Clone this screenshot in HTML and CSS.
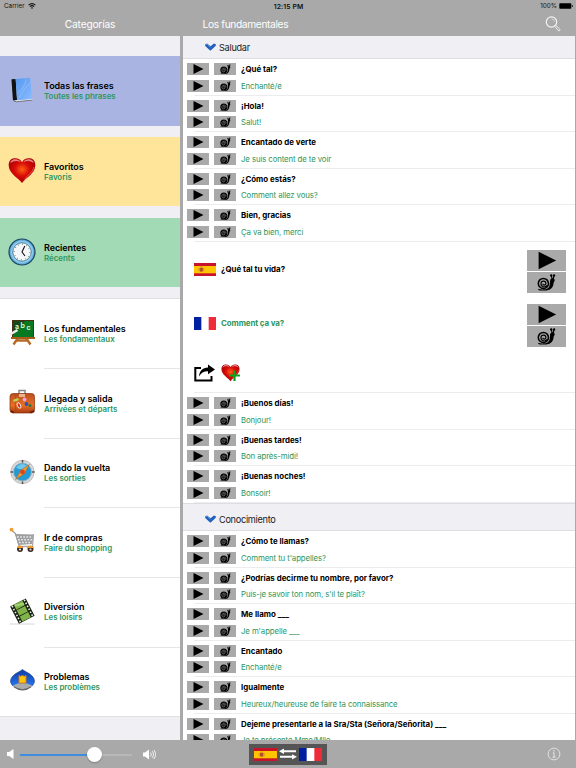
FILE: index.html
```html
<!DOCTYPE html>
<html lang="es">
<head>
    <meta charset="UTF-8">
    <meta name="viewport" content="width=device-width, initial-scale=1.0">
    <title>Los fundamentales</title>
    <link rel="stylesheet" href="styles.css">
</head>
<body>
    <svg class="sprite" width="0" height="0">
        <defs>
            <linearGradient id="gBook" x1="0" y1="0" x2="1" y2="1"><stop offset="0" stop-color="#5598ee"/><stop offset="1" stop-color="#8bbcff"/></linearGradient>
            <radialGradient id="gHeart" cx=".5" cy=".45" r=".55"><stop offset="0" stop-color="#ff6014"/><stop offset=".5" stop-color="#d90c08"/><stop offset="1" stop-color="#a80005"/></radialGradient>
            <radialGradient id="gClock"><stop offset=".7" stop-color="#b9ecff"/><stop offset="1" stop-color="#3c91c9"/></radialGradient>
            <linearGradient id="gCase" x1="0" y1="0" x2="0" y2="1"><stop offset="0" stop-color="#bd4f20"/><stop offset=".6" stop-color="#e87025"/><stop offset="1" stop-color="#a83a10"/></linearGradient>
            <linearGradient id="gCap" x1="0" y1="0" x2="0" y2="1"><stop offset="0" stop-color="#0d3ca4"/><stop offset="1" stop-color="#2476f0"/></linearGradient>
        </defs>
        <symbol id="play" viewBox="0 0 22 12"><path d="M6.5 1v10l10-5z"/></symbol>
        <symbol id="snail" viewBox="0 0 40 21">
            <path d="M11 17c3 1 8 1 10.500-.5 2-1.500 2-5 2.200-8 .2-1.500 1.300-2.300 2.500-2 1.400 0 2.400.9 2.200 2-.2 1-1 1.500-1.200 3.100-.4 4-2.700 6.600-7.200 7H13c-1 0-1.700-.7-2-1.600z"/>
            <circle cx="16.800" cy="11.500" r="5.200" class="shell"/>
            <path d="M20.500 13.500c-2 2.800-6.300 1.700-6.200-1.900.2-3.200 4.900-3.400 5.100-.3 0 2.300-3.200 2.500-3.100.4" class="spiral"/>
            <path d="M25.800 7l-.8-3.500M27 7l.6-3.500" class="spiral"/>
            <circle cx="24.800" cy="3.200" r="1.200"/><circle cx="27.800" cy="3.200" r="1.200"/>
        </symbol>
        <symbol id="snail-small" viewBox="0 0 22 12">
            <path d="M6.500 10.200c2 .7 5.700.5 6.800-1.300.7-1.200.2-3.600.8-5 .4-.8 2.300-.7 2.300.4-1.100 1.300-.9 3.300-1.900 5-1 1.600-2.500 1.800-4.200 1.800H8c-.8 0-1.300-.4-1.500-.9z"/>
            <circle cx="9.800" cy="7" r="3.500"/>
            <path d="M12 7.300c0-3-4.200-2.800-4.100-.1 0 2.500 3.300 2.100 3 .1-.2-1.200-1.700-1-1.600.1" fill="none" stroke="#a0a0a0" stroke-width=".6"/>
            <path d="M14.400 4l-.6-2.100M15.400 4l.5-2.500" class="feeler"/>
        </symbol>
        <symbol id="chevron" viewBox="0 0 11 8"><path d="M.2 1.300L2 .6l3.500 2.700L9 .6l1.800.7v1.500L5.700 7.500h-.6L.2 3z" fill="#2260bd"/><path d="M1 1.800L2.200 1.200l3.200 3" fill="none" stroke="#5f9be6" stroke-width=".8"/></symbol>
        <symbol id="spain" viewBox="0 0 24 13" preserveAspectRatio="none">
            <path d="M0 0h24v13H0z" fill="#c8142a"/><path d="M0 3h24v7.300H0z" fill="#ffc400"/>
            <path d="M6.200 4.700h3.600v2.600c0 2-3.600 2-3.600 0z" fill="#b5512a"/><path d="M7 4h2M5.400 5v3.300M10.600 5v3.300" stroke="#b07a3a" stroke-width=".6"/>
        </symbol>
        <symbol id="france" viewBox="0 0 24 13" preserveAspectRatio="none">
            <path d="M0 0h24v13H0z" fill="#fff"/><path d="M0 0h8v13H0z" fill="#00209f"/><path d="M16 0h8v13h-8z" fill="#ef2b3a"/>
        </symbol>
        <symbol id="heart" viewBox="0 0 28 28">
            <path d="M14 26C10 20.500.7 16.500.7 8.500.7 3 3.800 1.300 7.300 1.300c3 0 5.500 1.400 6.700 4 1.200-2.600 3.700-4 6.700-4 3.500 0 6.600 1.700 6.600 7.200C27.300 16.500 18 20.500 14 26z" fill="url(#gHeart)"/>
            <path d="M2.300 6.200C3 2.800 5.300 2.300 7.300 2.300c2.400 0 4.500 1.200 5.400 3-3.200-2-7.200-1.700-10.400.9zM25.700 6.200c-.7-3.400-3-3.900-5-3.900-2.400 0-4.500 1.200-5.400 3 3.200-2 7.200-1.700 10.400.9z" fill="#f3a1a1" opacity=".8"/>
            <path d="M26 10c-.8 4.500-5.500 8-9.500 12" fill="none" stroke="#ee7b72" stroke-width=".7"/>
        </symbol>
    </svg>

    <header class="topbar">
        <div class="status">
            <div class="status-left">Carrier
                <svg width="8" height="6" viewBox="0 0 8 6"><path d="M.6 2.200c2-1.900 4.800-1.900 6.800 0M1.900 3.600c1.300-1.200 2.900-1.200 4.200 0" fill="none" stroke="#111" stroke-width="1.100"/><path d="M2.900 4.600h2.200L4 5.900z"/></svg>
            </div>
            <div class="status-time">12:15 PM</div>
            <div class="status-right">100%
                <svg width="14" height="6" viewBox="0 0 14 6"><rect x=".3" y=".3" width="12" height="5.400" rx=".8"/><path d="M12.900 2v2l1-.5v-1z"/></svg>
            </div>
        </div>
        <div class="titles">
            <div class="title-left">Categorías</div>
            <div class="title-right">Los fundamentales</div>
            <svg class="search" width="16" height="16" viewBox="0 0 16 16" fill="none" stroke="#f4f4f4"><circle cx="6.500" cy="6" r="5.200" stroke-width="1.200"/><path d="M6.500 3a3 3 0 0 1 3 2.500" stroke-width=".6"/><path d="M9.800 10.300l1-1 3.900 3.700c1 1-.5 2.500-1.500 1.500z" stroke-width=".9"/></svg>
        </div>
    </header>

    <main class="main">
        <nav class="sidebar">
            <div class="category blue">
                <svg class="icon" viewBox="-1 -.5 30 30">
                    <path d="M3.200 3.200l4-.4 1.500 22.300-3.500.6z" fill="#111"/><path d="M5.200 25.700l19.500-2 .8 1.600L8 27z" fill="#eee"/><path d="M5.200 26.200l3 .9 17-1.800" fill="none" stroke="#444" stroke-width=".7"/>
                    <path d="M7.200 2.800L22.700 1.500l2 22.700-16 1.400z" fill="url(#gBook)"/><path d="M4.500 3l1.600 22.400" stroke="#111" stroke-width="3.600"/><path d="M9.500 18c5-4 8-9 9-15M11 23c3-7 7-12 12-16" fill="none" stroke="#a4cbff" stroke-width=".6"/>
                </svg>
                <div><div class="name">Todas las frases</div><div class="sub">Toutes les phrases</div></div>
            </div>
            <div class="category yellow">
                <svg class="icon"><use href="#heart"/></svg>
                <div><div class="name">Favoritos</div><div class="sub">Favoris</div></div>
            </div>
            <div class="category green">
                <svg class="icon" viewBox="0 0 28 28">
                    <circle cx="14" cy="14" r="13" fill="url(#gClock)" stroke="#1f4661" stroke-width="1.200"/><circle cx="14" cy="14" r="9.300" fill="#f4f6f8" stroke="#407b9c"/>
                    <circle cx="14" cy="14" r="7.800" fill="none" stroke="#333" stroke-width="1" stroke-dasharray=".7 3.384"/><path d="M16.800 8L14 14l3 4" fill="none" stroke="#111" stroke-width="1.100"/>
                </svg>
                <div><div class="name">Recientes</div><div class="sub">Récents</div></div>
            </div>
            <div class="group">
                <div class="category">
                    <svg class="icon" viewBox="0 0 28 28">
                        <path d="M10 20l-4.500 6.500M18 20l4.500 6.500M8 22.500h12" fill="none" stroke="#b86a25" stroke-width="2.400"/>
                        <path d="M4 2h22v18H4z" fill="#4d3012"/><path d="M5 3h20v16H5z" fill="#087823"/><path d="M5 3h12L5 17z" fill="#15491b"/>
                        <text x="7" y="11" class="chalk">a</text><text x="12.500" y="10" class="chalk">b</text><text x="18.500" y="11.500" class="chalk">c</text>
                        <path d="M2 16.500l7.500-4.500" stroke="#eee" stroke-width="2.400"/><path d="M3 20h24" stroke="#a85c1c" stroke-width="2"/>
                    </svg>
                    <div><div class="name">Los fundamentales</div><div class="sub">Les fondamentaux</div></div>
                </div>
                <div class="category">
                    <svg class="icon" viewBox="0 0 28 28">
                        <path d="M11 6V2.500h6V6" fill="none" stroke="#888" stroke-width="1.500"/><rect x="2" y="5.500" width="24.500" height="19.500" rx="3" fill="url(#gCase)" stroke="#87300d" stroke-width=".7"/>
                        <path d="M8 6c-1 6-1 13 0 19" fill="none" stroke="#a3441a" stroke-width=".7"/><path d="M11 6h6v3h-6z" fill="#e9b48a"/>
                        <ellipse cx="8" cy="12" rx="3" ry="1.300" transform="rotate(-20 8 12)" fill="#b5d94a"/><ellipse cx="11" cy="17.500" rx="1.500" ry="3" transform="rotate(-25 11 17.500)" fill="#cb2d17" stroke="#fff" stroke-width=".8"/>
                        <circle cx="16.500" cy="11.500" r="1.900" fill="#e9a5df"/><circle cx="18.500" cy="16" r="1.900" fill="#2853bd"/><circle cx="22" cy="17.500" r="1.500" fill="#1d7d45"/><path d="M3 23l3 1.500M26 23l-4 1.500" stroke="#622009" stroke-width="1.500"/>
                    </svg>
                    <div><div class="name">Llegada y salida</div><div class="sub">Arrivées et départs</div></div>
                </div>
                <div class="category">
                    <svg class="icon" viewBox="0 0 28 28">
                        <circle cx="14.500" cy="14" r="11.700" fill="#d6d8da" stroke="#b4b4b4" stroke-width=".8"/><circle cx="14.500" cy="14" r="9" fill="#239bd7" stroke="#9fb0b8" stroke-width=".8"/>
                        <path d="M14.500 2v2.500M14.500 23.500V26M2.500 14H5M24 14h2.500" stroke="#555" stroke-width="1.500"/><path d="M8 10c3-5 9-5 12-1l-5 3z" fill="#71c8ef"/>
                        <path d="M21.500 6.500L16 16l-8.500 5.500L13 12z" fill="#f39c2e" stroke="#a65e20" stroke-width=".5"/><circle cx="14.500" cy="14" r="2.400" fill="#e0441c"/>
                    </svg>
                    <div><div class="name">Dando la vuelta</div><div class="sub">Les sorties</div></div>
                </div>
                <div class="category">
                    <svg class="icon" viewBox="0 0 28 28">
                        <path d="M4 3.500l3.500 3 4 13.500" fill="none" stroke="#999" stroke-width="1.200"/><circle cx="3.500" cy="2.700" r="1.900" fill="#f29a34"/>
                        <path d="M7 7l18.500.5-1.200 9.500-14 1z" fill="#9c9ea0"/><path d="M9 10h15M10 12.800h14M11 15.500h12" stroke="#e7e8e9" stroke-width="1.500" stroke-dasharray="1.800 1.300"/>
                        <path d="M25.500 7l-1 12.500H11" fill="none" stroke="#aaa" stroke-width="1.300"/>
                        <circle cx="12" cy="22" r="3" fill="#3a2b26"/><circle cx="22.500" cy="22" r="3" fill="#3a2b26"/><path d="M8.800 21c1-3.500 5.400-3.500 6.400 0zM19.300 21c1-3.500 5.400-3.500 6.400 0z" fill="#f49825"/><circle cx="12" cy="22.500" r="1.100" fill="#ddd"/><circle cx="22.500" cy="22.500" r="1.100" fill="#ddd"/>
                    </svg>
                    <div><div class="name">Ir de compras</div><div class="sub">Faire du shopping</div></div>
                </div>
                <div class="category">
                    <svg class="icon" viewBox="0 0 28 28">
                        <path d="M1.500 27h25" stroke="#ccc" stroke-width=".8"/>
                        <g transform="rotate(-27 14 14)"><path d="M5.500 4.500h17.500v19.500H5.500z" fill="#15200c"/><path d="M9.500 4.800h9.500v5.400H9.500zM9.500 11h9.500v6H9.500zM9.500 17.800h9.500v5.700H9.500z" fill="#80b34a"/><path d="M10 5l9 2v2.500l-9-2.500z" fill="#a6d277"/><path d="M7.500 5v18.500M21.100 5v18.500" stroke="#eee" stroke-width="1.600" stroke-dasharray="1.600 1.700"/></g>
                    </svg>
                    <div><div class="name">Diversión</div><div class="sub">Les loisirs</div></div>
                </div>
                <div class="category">
                    <svg class="icon" viewBox="0 0 28 28">
                        <path d="M14.500 3.500c3 2.500 7.500 3.500 10.500 7.500 2.500 4 1.500 6-1 9H5c-2.500-3-3.500-5-1-9 3-4 7.500-5 10.500-7.500z" fill="url(#gCap)" stroke="#15337a" stroke-width=".6"/>
                        <path d="M5 19.500c6-3.300 13-3.300 19 0-3 5.500-16 5.500-19 0z" fill="#a9abad"/><path d="M6 20.800c5 4 12 4 17 0" fill="none" stroke="#666" stroke-width="1.200"/>
                        <path d="M11 9.500l1.500.8 2-.8 2 .8 1.500-.8v7.500h-7z" fill="#ffc50a" stroke="#dc7608" stroke-width=".9"/>
                    </svg>
                    <div><div class="name">Problemas</div><div class="sub">Les problèmes</div></div>
                </div>
            </div>
        </nav>

        <section class="content">
            <div class="section-title"><svg><use href="#chevron"/></svg>Saludar</div>
            <div id="saludar"></div>
            <div class="detail">
                <div class="detail-row">
                    <svg class="flag"><use href="#spain"/></svg>
                    <div class="detail-text">¿Qué tal tu vida?</div>
                    <div class="big-buttons"><svg class="big"><use href="#play"/></svg><svg class="big"><use href="#snail"/></svg></div>
                </div>
                <div class="detail-row">
                    <svg class="flag"><use href="#france"/></svg>
                    <div class="detail-text french">Comment ça va?</div>
                    <div class="big-buttons"><svg class="big"><use href="#play"/></svg><svg class="big"><use href="#snail"/></svg></div>
                </div>
                <div class="actions">
                    <svg width="21" height="18" viewBox="0 0 21 18"><path d="M7 4H1.300v12.500H17.500V12" fill="none" stroke="#000" stroke-width="2"/><path d="M5 12.500C5.500 7 8.500 3.800 14 3.500V.5l7 5-7 4.800V7.300C9.500 7.300 7 9 5 12.500z"/></svg>
                    <svg width="20" height="18" viewBox="0 0 20 18"><use href="#heart" x="-.5" y="-.5" width="20" height="19"/><path d="M13.500 6.500V17M8 11.500h11" stroke="#08a51c" stroke-width="2.200"/></svg>
                </div>
            </div>
            <div id="buenos"></div>
            <div class="section-title second"><svg><use href="#chevron"/></svg>Conocimiento</div>
            <div id="conocimiento"></div>
        </section>
    </main>

    <footer class="bottombar">
        <svg class="mute" width="7" height="10" viewBox="0 0 7 10" fill="#fff"><path d="M0 3h2.200L6.500 0v10L2.200 7H0z"/></svg>
        <div class="slider"><div class="filled"></div><div class="knob"></div></div>
        <svg class="loud" width="13" height="11" viewBox="0 0 13 11"><path d="M0 3.500h2L6 .5v10l-4-3H0z" fill="#fff"/><path d="M7.500 3.500c1 1.200 1 2.800 0 4M9.200 2.200c1.700 2 1.700 4.600 0 6.600M10.800 1c2.300 2.800 2.300 6.200 0 9" fill="none" stroke="#fff" stroke-width=".9"/></svg>
        <div class="language">
            <svg class="flag"><use href="#spain"/></svg>
            <svg width="18" height="12" viewBox="0 0 18 12" fill="#fff"><path d="M0 3.200L5 .6v1.700h12v2H5V6zM18 8.800l-5 2.600V9.800H1v-2h12V6.200z"/></svg>
            <svg class="flag"><use href="#france"/></svg>
        </div>
        <svg class="info" width="14" height="14" viewBox="0 0 14 14" fill="none" stroke="#eee"><circle cx="7" cy="7" r="5.900" stroke-width=".8"/><path d="M5.800 5.800H7V10M5.500 10.200h3" stroke-width=".9"/><circle cx="6.900" cy="3.700" r=".5" fill="#eee" stroke-width=".4"/></svg>
    </footer>

    <script>
        const phrases = {
            saludar: [
                ["¿Qué tal?", "Enchanté/e"],
                ["¡Hola!", "Salut!"],
                ["Encantado de verte", "Je suis content de te voir"],
                ["¿Cómo estás?", "Comment allez vous?"],
                ["Bien, gracias", "Ça va bien, merci"]
            ],
            buenos: [
                ["¡Buenos días!", "Bonjour!"],
                ["¡Buenas tardes!", "Bon après-midi!"],
                ["¡Buenas noches!", "Bonsoir!"]
            ],
            conocimiento: [
                ["¿Cómo te llamas?", "Comment tu t'appelles?"],
                ["¿Podrías decirme tu nombre, por favor?", "Puis-je savoir ton nom, s'il te plaît?"],
                ["Me llamo ___", "Je m'appelle ___"],
                ["Encantado", "Enchanté/e"],
                ["Igualmente", "Heureux/heureuse de faire ta connaissance"],
                ["Dejeme presentarle a la Sra/Sta (Señora/Señorita) ___", "Je te présente Mme/Mlle"]
            ]
        };
        const buttons = '<svg class="small"><use href="#play"/></svg><svg class="small"><use href="#snail-small"/></svg>';

        for (const id in phrases) {
            document.getElementById(id).innerHTML = phrases[id].map(p => `
                <div class="phrase">
                    <div class="line">${buttons}<span class="spanish">${p[0]}</span></div>
                    <div class="line">${buttons}<span class="translation">${p[1]}</span></div>
                </div>
            `).join('');
        }
    </script>
</body>
</html>
```

FILE: styles.css
```css
* {
    box-sizing: border-box;
}
body {
    margin: 0;
    width: 576px;
    height: 768px;
    display: flex;
    flex-direction: column;
    overflow: hidden;
    font-family: Inter, "Liberation Sans", sans-serif;
    color: #000;
    background-color: #a9a9a9;
}
svg {
    display: block;
    flex: none;
}
.sprite {
    position: absolute;
}
.topbar {
    height: 36px;
    flex: none;
}
.status {
    display: grid;
    grid-template-columns: 1fr 1fr 1fr;
    height: 12px;
    padding: 0 3px 0 4px;
    align-items: center;
    font-size: 6.3px;
    color: #111;
}
.status-left, .status-right {
    display: flex;
    align-items: center;
    gap: 3px;
}
.status-right {
    justify-content: flex-end;
    gap: 2px;
}
.status-time {
    text-align: center;
    font-size: 6.8px;
    font-weight: 600;
    letter-spacing: 0.1px;
}
.titles {
    display: flex;
    align-items: center;
    height: 24px;
    font-size: 10.2px;
    letter-spacing: -0.35px;
    color: #fff;
}
.title-left {
    width: 180px;
    text-align: center;
    letter-spacing: -0.2px;
}
.title-right {
    padding-left: 22.500px;
    flex: 1;
}
.search {
    margin-right: 15px;
}
.main {
    display: flex;
    height: 704px;
    padding-right: 1px;
}
.sidebar {
    width: 180px;
    padding-top: 20px;
    background-color: #efeff4;
    flex: none;
}
.category {
    display: flex;
    align-items: center;
    height: 69.6px;
    padding-left: 8px;
    position: relative;
}
.category .icon {
    width: 28px;
    height: 28px;
    margin-right: 8px;
    position: relative;
    top: -1px;
}
.blue, .yellow, .green {
    margin-bottom: 11.3px;
}
.blue {
    background-color: #a9b4e2;
}
.yellow {
    background-color: #ffe599;
}
.green {
    background-color: #a2dab5;
    margin-bottom: 10.3px;
}
.group {
    background-color: #fff;
    border-top: 1px solid #e0e0e3;
    border-bottom: 1px solid #e0e0e3;
}
.group .category + .category::before {
    content: "";
    position: absolute;
    left: 44px;
    right: 0;
    top: 0;
    border-top: 1px solid #e6e6e8;
}
.name {
    font-size: 9px;
    line-height: 12px;
    font-weight: 600;
    letter-spacing: -0.08px;
}
.sub {
    font-size: 7.9px;
    line-height: 9px;
    font-weight: 600;
    color: #2e965e;
}
.chalk {
    font-size: 7px;
    fill: #d9ffe0;
    font-weight: 600;
}
.content {
    flex: 1;
    margin-left: 3px;
    background-color: #fff;
    overflow: hidden;
}
.section-title {
    display: flex;
    align-items: center;
    height: 23px;
    padding-left: 22px;
    gap: 3px;
    font-size: 9.2px;
    letter-spacing: -0.3px;
    color: #222;
    background-color: #efeff4;
    border-bottom: 1px solid #dedee2;
}
.section-title svg {
    width: 11px;
    height: 8px;
}
.section-title.second {
    height: 28.5px;
    padding-top: 5px;
    border-top: 1px solid #dedee2;
}
.phrase {
    height: 36.5px;
    padding: 4px 0 0 4px;
    position: relative;
}
.phrase::after {
    content: "";
    position: absolute;
    left: 11px;
    right: 0;
    bottom: 0;
    border-bottom: 1px solid #ececee;
}
.line {
    display: flex;
    align-items: center;
    height: 12px;
    margin-bottom: 4.5px;
    white-space: nowrap;
}
.small {
    width: 22px;
    height: 12px;
    margin-right: 5px;
    background-color: #a9a9a9;
}
.spanish {
    font-size: 7.9px;
    font-weight: 700;
    letter-spacing: 0.01px;
}
.translation {
    font-size: 7.8px;
    letter-spacing: -0.1px;
    color: #2e965e;
}
.feeler {
    fill: none;
    stroke: #000;
    stroke-width: 1.1;
}
.shell {
    fill: #a9a9a9;
    stroke: #000;
    stroke-width: 1.6;
}
.spiral {
    fill: none;
    stroke: #000;
    stroke-width: 1.2;
}
.detail {
    height: 151.5px;
    padding: 8px 9px 0 11px;
    position: relative;
}
.detail::after {
    content: "";
    position: absolute;
    left: 11px;
    right: 0;
    bottom: 0;
    border-bottom: 1px solid #ececee;
}
.detail-row {
    display: flex;
    height: 54px;
}
.flag {
    width: 22px;
    height: 13px;
}
.detail-row .flag {
    margin: 13.5px 5px 0 0;
}
.detail-text {
    flex: 1;
    font-size: 7.9px;
    font-weight: 700;
    line-height: 12px;
    padding-top: 13.5px;
}
.french {
    color: #2e965e;
    letter-spacing: -0.08px;
}
.big-buttons {
    display: flex;
    flex-direction: column;
    gap: 1.5px;
}
.big {
    width: 39px;
    height: 21px;
    background-color: #a9a9a9;
}
.actions {
    display: flex;
    gap: 6px;
    padding-top: 6.5px;
}
.bottombar {
    display: flex;
    align-items: center;
    height: 28px;
    flex: none;
}
.mute {
    margin-left: 7px;
}
.slider {
    width: 112px;
    height: 2px;
    margin: 1px 11px 0 6px;
    background-color: #b8b8b8;
    position: relative;
}
.filled {
    width: 67px;
    height: 2px;
    background-color: #3f8de0;
}
.knob {
    position: absolute;
    left: 67px;
    top: -6.5px;
    width: 15px;
    height: 15px;
    border-radius: 50%;
    background-color: #fff;
    box-shadow: 0 1px 2px rgba(0,0,0,0.25);
}
.language {
    display: flex;
    align-items: center;
    justify-content: center;
    width: 78px;
    height: 21px;
    gap: 2px;
    margin-left: 93px;
    background-color: #555;
}
.language .flag {
    width: 23px;
}
.info {
    margin-left: auto;
    margin-right: 15px;
}
```
